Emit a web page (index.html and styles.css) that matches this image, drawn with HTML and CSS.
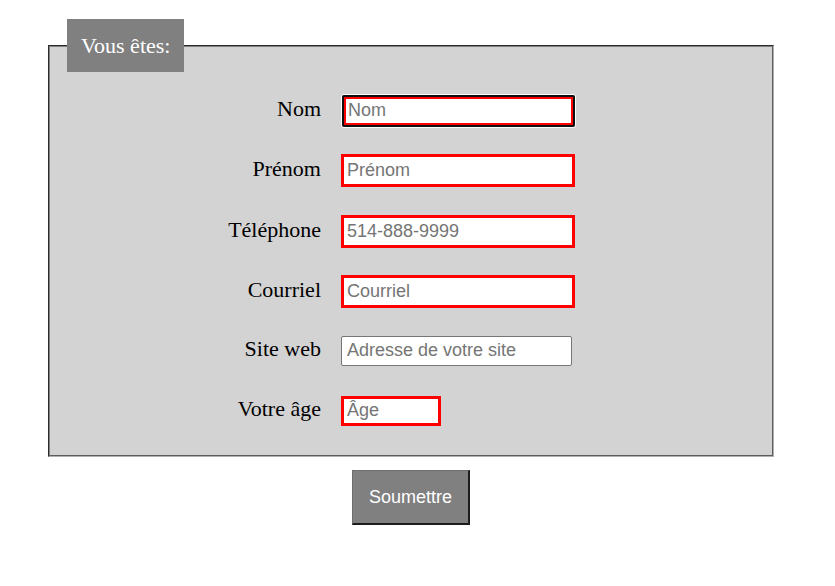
FILE: index.html
```html
<!DOCTYPE html>
<html lang="fr">
<head>
<meta charset="utf-8">
<title>Formulaire</title>
<link rel="stylesheet" href="styles.css">
</head>
<body>
<form class="form">
  <fieldset class="box">
    <legend class="box-title">Vous êtes:</legend>
    <div class="rows">
      <div class="row">
        <label class="lbl" for="nom">Nom</label>
        <input class="field field-focus" id="nom" type="text" placeholder="Nom">
      </div>
      <div class="row">
        <label class="lbl" for="prenom">Prénom</label>
        <input class="field field-req" id="prenom" type="text" placeholder="Prénom">
      </div>
      <div class="row">
        <label class="lbl" for="tel">Téléphone</label>
        <input class="field field-req" id="tel" type="text" placeholder="514-888-9999">
      </div>
      <div class="row">
        <label class="lbl" for="mail">Courriel</label>
        <input class="field field-req" id="mail" type="text" placeholder="Courriel">
      </div>
      <div class="row">
        <label class="lbl" for="site">Site web</label>
        <input class="field field-opt" id="site" type="text" placeholder="Adresse de votre site">
      </div>
      <div class="row">
        <label class="lbl" for="age">Votre âge</label>
        <input class="field field-req field-age" id="age" type="text" placeholder="Âge">
      </div>
    </div>
  </fieldset>
  <div class="actions">
    <button class="submit" type="button">Soumettre</button>
  </div>
</form>
</body>
</html>
```
FILE: styles.css
```css
html, body {
  margin: 0;
  padding: 0;
  background: #ffffff;
}

body {
  font-family: "Liberation Serif", "Times New Roman", serif;
  color: #000;
}

.form {
  padding-top: 19px;
  padding-left: 48px;
  width: 726px;
}

.box {
  box-sizing: border-box;
  width: 726px;
  margin: 0;
  padding: 22px 0 26px 0;
  border: 2px groove #b0b0b0;
  border-top-color: #808080;
  border-left-color: #808080;
  background: #d3d3d3;
}

.box-title {
  margin-left: 17px;
  padding: 15px 14px;
  background: #808080;
  color: #ffffff;
  font-size: 22px;
  line-height: 23px;
}

.rows {
  display: flex;
  flex-direction: column;
  gap: 27.4px;
}

.row {
  display: flex;
  align-items: baseline;
  height: 33px;
}

.lbl {
  width: 271px;
  margin-right: 20px;
  text-align: right;
  font-size: 22px;
}

.field {
  box-sizing: border-box;
  margin: 0;
  font-family: "Liberation Sans", Arial, sans-serif;
  font-size: 18px;
  color: #000;
  background: #fff;
  outline: none;
}

.field::placeholder {
  color: #757575;
}

.field-req {
  width: 234px;
  height: 33px;
  border: 3px solid #ff0000;
  padding: 0 3px;
}

.field-focus {
  width: 235px;
  height: 34px;
  border: 1px solid #ffffff;
  border-radius: 3px;
  padding: 0 0 2px 6px;
  box-shadow: inset 0 0 0 4px #ff0000;
  outline: 2px solid #101010;
  outline-offset: -3px;
}

.field-opt {
  width: 231px;
  height: 30px;
  border: 1px solid #767676;
  border-radius: 2px;
  padding: 0 5px;
}

.field-age {
  width: 100px;
  height: 30px;
}

.actions {
  display: flex;
  justify-content: center;
  padding-top: 13px;
}

.submit {
  box-sizing: border-box;
  width: 118px;
  height: 55px;
  padding: 1px 0 0 0;
  background: #808080;
  color: #ffffff;
  font-family: "Liberation Sans", Arial, sans-serif;
  font-size: 18px;
  border-style: solid;
  border-width: 1px 2px 2px 1px;
  border-color: #6e6e6e #1c1c1c #1c1c1c #6e6e6e;
  cursor: pointer;
}
```
